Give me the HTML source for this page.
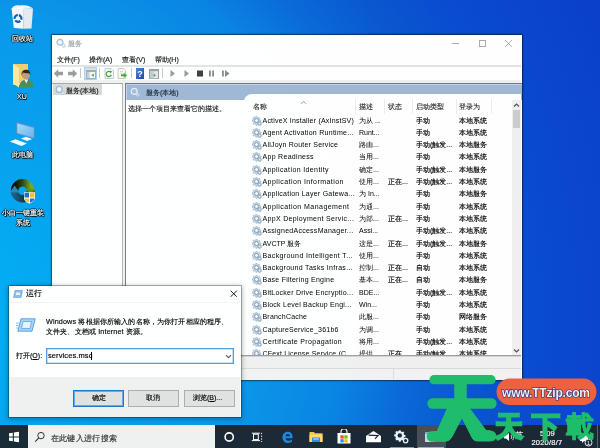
<!DOCTYPE html>
<html><head><meta charset="utf-8">
<style>
*{margin:0;padding:0;box-sizing:border-box}
html,body{width:600px;height:448px;overflow:hidden}
body{position:relative;font-family:"Liberation Sans",sans-serif;font-size:7px;color:#1a1a1a;
background:radial-gradient(circle at -54px 312px,#02b4f8 0px,#04aaf3 80px,#0a98ea 300px,#0a84e2 400px,#0a6ad8 462px,#0a58d0 520px,#0a4bd0 590px,#0a43cc 680px,#0a3dc8 760px)}
.a{position:absolute}
.t{position:absolute;white-space:nowrap;line-height:1;-webkit-text-stroke-width:.15px}
.dl{color:#fff;text-shadow:-.6px 0 .4px #000,.6px 0 .4px #000,0 -.6px .4px #000,0 .6px .4px #000,.8px .8px 1px #000;font-size:7px;text-align:center}
.menu{font-size:7px;color:#1a1a1a}
.hdr{font-size:7px;color:#333}
.vs{top:99px;width:1px;height:15px;background:#ececec}
.srow{position:absolute;left:0;height:12px;width:600px;white-space:nowrap;line-height:1;color:#000}
.srow span{position:absolute;top:1px}
.gi{position:absolute;left:252px;top:0}
.srow .c1{left:262.5px}.srow .c2{left:359px}.srow .c3{left:388px}.srow .c4{left:416px}.srow .c5{left:459px}
.srow .c3,.srow .c4,.srow .c5{-webkit-text-stroke:.15px #000}
.btn{top:390px;height:17px;background:#e1e1e1;border:1px solid #adadad}
.wmc{font-size:28px;font-weight:bold;color:#20be6b;-webkit-text-stroke:2px #20be6b}
/* services window */
#sw{left:50.5px;top:34px;width:472px;height:347px;background:#fff;background-clip:padding-box;border:1px solid rgba(0,0,0,.3);box-shadow:0 0 2px rgba(0,0,0,.3)}
#rw{left:8px;top:284.5px;width:233.5px;height:133.5px;background:#fff;background-clip:padding-box;border:1px solid rgba(0,0,0,.28);box-shadow:0 1px 5px rgba(0,0,0,.3)}
#tb{left:0;top:425px;width:600px;height:23px;background:#1c2a36}
</style></head><body><div style="position:absolute;left:0;top:0;width:600px;height:448px;will-change:transform;opacity:.999">
<!-- desktop icons -->
<svg class="a" style="left:0;top:0" width="50" height="210" viewBox="0 0 50 210">
<defs><linearGradient id="ring" x1="0" y1="0" x2="0" y2="1"><stop offset="0" stop-color="#5f9a18"/><stop offset=".45" stop-color="#2c4a10"/><stop offset=".55" stop-color="#0f2a30"/><stop offset="1" stop-color="#1d5a7a"/></linearGradient></defs>
<!-- recycle bin -->
<path d="M23 8L33 8.8L31.5 28.6L23.5 28.8Z" fill="#e6eaee"/>
<path d="M11.5 8L23 8L23.5 28.8L13.8 28Z" fill="#f4f6f8"/>
<path d="M12 8.5C13 5.5 17 4.8 20 5.5C24 4.5 30 5.5 32.8 8.5Z" fill="#fbfcfd"/>
<circle cx="18" cy="18.4" r="3.4" fill="none" stroke="#1b5db2" stroke-width="2.2" stroke-dasharray="5.6 1.5" transform="rotate(-75 18 18.4)"/><path d="M12.5 8.5C14 7 16 6.5 18 7.2C20 6 23 6.3 25 7.5C27 6.8 30 7 32.5 8.8" fill="none" stroke="#dfe6ec" stroke-width=".8"/>
<!-- user folder -->
<path d="M13 64H28V85H13Z" fill="#f0cf6e"/>
<path d="M13 64L19 68V87.5L13 83.5Z" fill="#fbe7a1"/>
<path d="M19.5 87.5C19.5 82.5 22 79.8 26.5 79.8C31 79.8 33.5 82.5 33.5 87.5Z" fill="#4d8f52"/>
<path d="M24.5 80L26.3 83.5L28 80Z" fill="#e8f0e8"/>
<circle cx="26" cy="75" r="4.2" fill="#c79a74"/>
<path d="M21.6 75.5C21.2 71.2 23.5 69.8 26 69.8C28.8 69.8 30.6 71.5 30.3 75.8L29.2 73.2C27.5 73.5 24.5 73.2 22.8 72.6Z" fill="#2b2824"/>
<!-- this pc -->
<defs><linearGradient id="scr" x1="0" y1="0" x2="1" y2="1"><stop offset="0" stop-color="#a8dafc"/><stop offset="1" stop-color="#6cb2ec"/></linearGradient></defs><path d="M16.3 122L34.7 127V138.8L16.3 133.8Z" fill="#5d9fd6" stroke="#4a86bd" stroke-width=".5"/>
<path d="M17.3 123.4L33.7 127.9V137.4L17.3 132.9Z" fill="url(#scr)"/>
<path d="M20.8 138.5L26 136.8L32.2 139L27 141Z" fill="#eef6fc"/>
<path d="M9.8 141.5L15.5 139.2L27 143.5L21.5 146Z" fill="#f2f8fd"/>
<!-- xiaobai -->
<defs><linearGradient id="rtop" x1="0" y1="0" x2="1" y2="0"><stop offset="0" stop-color="#0c0c08"/><stop offset=".5" stop-color="#2f4a10"/><stop offset="1" stop-color="#74a820"/></linearGradient><linearGradient id="rbot" x1="0" y1="0" x2="1" y2="0"><stop offset="0" stop-color="#1d5f80"/><stop offset="1" stop-color="#0a1e2a"/></linearGradient></defs>
<path d="M14.6 190.8A8 8 0 0 1 30.6 190.8" fill="none" stroke="url(#rtop)" stroke-width="7.5"/>
<path d="M30.6 190.8A8 8 0 0 1 14.6 190.8" fill="none" stroke="url(#rbot)" stroke-width="7.5"/>
<path d="M25.5 189L35.5 189L30.6 195Z" fill="#5f9418"/>
<path d="M9.8 192.5L19.4 192.5L14.6 185.5Z" fill="#2b87b5"/>
<path d="M24 192.3H35V199C33 202 30 203.5 29.5 203.6C29 203.5 25 202 24 199Z" fill="#fff"/>
<path d="M24.5 192.8H29V197.5H24.5Z" fill="#1f6fce"/>
<path d="M30 192.8H34.5V197.5H30Z" fill="#f4bd3d"/>
<path d="M24.5 198.5H29V202.8C26.5 201.8 25 200.5 24.5 199Z" fill="#f4bd3d"/>
<path d="M30 198.5H34.5V199C34 200.5 32.5 201.8 30 202.8Z" fill="#1f6fce"/>
</svg>
<div class="t dl" style="left:12px;top:35px">回收站</div>
<div class="t dl" style="left:17px;top:93px">XU</div>
<div class="t dl" style="left:12px;top:151px">此电脑</div>
<div class="t dl" style="left:2px;top:209px">小白一键重装</div>
<div class="t dl" style="left:16px;top:219px">系统</div>

<!-- services window -->
<div id="sw" class="a"></div>
<svg class="a" style="left:56px;top:38px" width="10" height="10" viewBox="0 0 10 10"><circle cx="4" cy="4.2" r="2.9" fill="#f2f7fc" stroke="#a6c3de" stroke-width="1.4"/><circle cx="7.6" cy="7.8" r="1.5" fill="#fff" stroke="#aac6e0" stroke-width="1"/></svg>
<div class="t" style="left:68px;top:40px;color:#ababab;font-size:7.2px;-webkit-text-stroke-width:.25px">服务</div>
<div class="a" style="left:452px;top:43px;width:7px;height:1px;background:#ababab"></div>
<div class="a" style="left:479px;top:40px;width:7px;height:7px;border:1px solid #ababab"></div>
<svg class="a" style="left:504px;top:39px" width="9" height="9" viewBox="0 0 9 9"><path d="M1 1L8 8M8 1L1 8" stroke="#ababab" stroke-width=".9"/></svg>
<div class="t menu" style="left:57px;top:56px">文件(F)</div>
<div class="t menu" style="left:89px;top:56px">操作(A)</div>
<div class="t menu" style="left:122px;top:56px">查看(V)</div>
<div class="t menu" style="left:155px;top:56px">帮助(H)</div>
<div class="a" style="left:52px;top:65px;width:469px;height:2px;background:#e3e3e3"></div>
<!-- toolbar -->
<svg class="a" style="left:53px;top:68px" width="26" height="11" viewBox="0 0 26 11">
<path d="M.8 5.5L5.2 1.2V3.8H10V7.2H5.2V9.8Z" fill="#9c9c9c"/>
<path d="M24.2 5.5L19.8 1.2V3.8H15V7.2H19.8V9.8Z" fill="#9c9c9c"/></svg>
<div class="a" style="left:80px;top:68px;width:1px;height:10px;background:#c8c8c8"></div>
<div class="a" style="left:84px;top:67px;width:13px;height:13px;background:#cce4f7;border:1px solid #a8d2f5"></div>
<svg class="a" style="left:86px;top:70px" width="10" height="9" viewBox="0 0 10 9"><rect x="0" y="0" width="10" height="9" fill="#a3acb5"/><rect x="1" y="2" width="8" height="6" fill="#f4f6f8"/><rect x="1" y="2" width="2.6" height="6" fill="#c9d0d7"/><path d="M7.8 3.6L5.4 5.2L7.8 6.8Z" fill="#3aa83a"/></svg>
<div class="a" style="left:99px;top:68px;width:1px;height:10px;background:#c8c8c8"></div>
<svg class="a" style="left:104px;top:68px" width="11" height="11" viewBox="0 0 11 11"><path d="M1 .5H7L9.5 3V10.5H1Z" fill="#fafafa" stroke="#b5bcc3" stroke-width=".8"/><path d="M7.3 6.8A2.6 2.6 0 1 1 6.6 4.1" fill="none" stroke="#3ea83e" stroke-width="1.3"/><path d="M5.6 2.6L8.2 3.6L6.4 5.6Z" fill="#3ea83e"/></svg>
<svg class="a" style="left:117px;top:68px" width="11" height="11" viewBox="0 0 11 11"><path d="M1 .5H6.5L8.5 2.5V10.5H1Z" fill="#fbfaf4" stroke="#b9bdb0" stroke-width=".8"/><path d="M3 3.5H6M3 5H5" stroke="#c9c2a0" stroke-width=".6"/><path d="M4 6.3H6.8V4.8L10.3 7.3L6.8 9.8V8.3H4Z" fill="#3fb03f"/></svg>
<div class="a" style="left:131px;top:68px;width:1px;height:10px;background:#c8c8c8"></div>
<svg class="a" style="left:136px;top:68px" width="8" height="11" viewBox="0 0 8 11"><defs><linearGradient id="hg" x1="0" y1="0" x2="1" y2="1"><stop offset="0" stop-color="#4f86d8"/><stop offset="1" stop-color="#1f48a8"/></linearGradient></defs><rect x="0" y="0" width="8" height="11" fill="url(#hg)"/><text x="4" y="8.8" font-size="9" font-family="Liberation Sans" font-weight="bold" fill="#fff" text-anchor="middle">?</text></svg>
<svg class="a" style="left:149px;top:69px" width="10" height="10" viewBox="0 0 10 10"><rect x="0" y="0" width="10" height="10" fill="#9aa2aa"/><rect x="1" y="2.2" width="8" height="7" fill="#e4e7ea"/><rect x="1" y="2.2" width="3.2" height="7" fill="#c5ccd3"/><path d="M4.5 4.5L7 6.2L4.5 7.9Z" fill="#3fae3f"/></svg>
<div class="a" style="left:162px;top:68px;width:1px;height:10px;background:#c8c8c8"></div>
<svg class="a" style="left:168px;top:68px" width="66" height="11" viewBox="0 0 66 11">
<path d="M2.5 2L7 5.5L2.5 9Z" fill="#9a9a9a"/>
<path d="M16.5 2L21 5.5L16.5 9Z" fill="#9a9a9a"/>
<rect x="29" y="2.5" width="6" height="6" fill="#404040"/>
<rect x="41" y="2.5" width="1.8" height="6" fill="#8a8a8a"/><rect x="44.2" y="2.5" width="1.8" height="6" fill="#8a8a8a"/>
<rect x="54" y="2.5" width="1.8" height="6" fill="#8a8a8a"/><path d="M57 2L61.5 5.5L57 9Z" fill="#8a8a8a"/>
</svg>
<!-- panes background -->
<div class="a" style="left:52px;top:80px;width:469px;height:300px;background:#f0f0f0"></div>
<div class="a" style="left:51.5px;top:83px;width:71.5px;height:273px;background:#fff;border-top:1px solid #a8a8a8;border-right:1px solid #b5b5b5;border-bottom:1px solid #c9c9c9"></div>
<div class="a" style="left:53px;top:84px;width:49px;height:11px;background:#d9d9d9"></div>
<svg class="a" style="left:55px;top:85px" width="10" height="10" viewBox="0 0 10 10"><circle cx="4.2" cy="4.4" r="3" fill="#f0f5fa" stroke="#9fbcd8" stroke-width="1.4"/><circle cx="7.8" cy="8" r="1.4" fill="#fff" stroke="#a6c2dc" stroke-width=".9"/></svg>
<div class="t menu" style="left:66px;top:87px">服务(本地)</div>
<!-- right pane -->
<div class="a" style="left:124.5px;top:83px;width:397px;height:274px;background:#fff;border-left:1px solid #77808a;border-top:1px solid #6d7a88"></div>
<div class="a" style="left:125.5px;top:84px;width:396px;height:16px;background:#a0b8d5;box-shadow:inset 1px 1px 0 #c3d3e4"></div>
<div class="a" style="left:244px;top:94px;width:277px;height:10px;background:#fff;border-top-left-radius:8px"></div>
<svg class="a" style="left:130px;top:87px" width="10" height="10" viewBox="0 0 10 10"><circle cx="4.2" cy="4.4" r="3" fill="#a8bed8" stroke="#e2ecf6" stroke-width="1.3"/><circle cx="7.8" cy="8" r="1.3" fill="#a8bed8" stroke="#d8e4f0" stroke-width=".8"/></svg>
<div class="t" style="left:146px;top:89px;font-size:7px;color:#1e2b3a">服务(本地)</div>
<div class="t" style="left:128px;top:105px;font-size:7px">选择一个项目来查看它的描述。</div>
<!-- list header -->
<div class="t hdr" style="left:253px;top:103.3px">名称</div>
<svg class="a" style="left:300px;top:99.5px" width="7" height="5" viewBox="0 0 7 5"><path d="M1 3.8L3.5 1.3L6 3.8" fill="none" stroke="#8a8a8a" stroke-width=".9"/></svg>
<div class="a vs" style="left:355px"></div>
<div class="a vs" style="left:384px"></div>
<div class="a vs" style="left:412px"></div>
<div class="a vs" style="left:456px"></div>
<div class="a vs" style="left:491px"></div>
<div class="t hdr" style="left:359px;top:103.3px">描述</div>
<div class="t hdr" style="left:388px;top:103.3px">状态</div>
<div class="t hdr" style="left:416px;top:103.3px">启动类型</div>
<div class="t hdr" style="left:459px;top:103.3px">登录为</div>
<!-- scrollbar -->
<div class="a" style="left:512px;top:100px;width:9px;height:256px;background:#f0f0f0"></div>
<svg class="a" style="left:513px;top:102px" width="7" height="6" viewBox="0 0 7 6"><path d="M1 4.5L3.5 2L6 4.5" fill="none" stroke="#555" stroke-width="1.2"/></svg>
<div class="a" style="left:513px;top:110px;width:7px;height:18px;background:#cdcdcd"></div>
<svg class="a" style="left:513px;top:348px" width="7" height="6" viewBox="0 0 7 6"><path d="M1 1.5L3.5 4L6 1.5" fill="none" stroke="#555" stroke-width="1.2"/></svg>
<div class="a" style="left:245px;top:114px;width:267px;height:241px;overflow:hidden">
<div class="a" style="left:-245px;top:-114px;width:600px;height:448px">
<div class="srow" style="top:115.5px"><svg class="gi" width="10" height="10" viewBox="0 0 10 10"><path d="M3.9 .3h1.2l.3 1.1 .9.4 1-.6.8.8-.6 1 .4.9 1.1.3v1.2l-1.1.3-.4.9.6 1-.8.8-1-.6-.9.4-.3 1.1H3.9l-.3-1.1-.9-.4-1 .6-.8-.8.6-1-.4-.9L0 5.1V3.9l1.1-.3.4-.9-.6-1 .8-.8 1 .6.9-.4z" fill="#c6d6e4" stroke="#94abc2" stroke-width=".5"/><circle cx="4.5" cy="4.5" r="2" fill="#f4f8fb" stroke="#7893ae" stroke-width=".9"/><circle cx="7.6" cy="7.6" r="1.9" fill="#b3c6d8" stroke="#7d95ad" stroke-width=".5"/><circle cx="7.6" cy="7.6" r=".6" fill="#fff"/></svg><span class="c1" style="letter-spacing:0.21px">ActiveX Installer (AxInstSV)</span><span class="c2">为从 ...</span><span class="c3"></span><span class="c4">手动</span><span class="c5">本地系统</span></div>
<div class="srow" style="top:127.8px"><svg class="gi" width="10" height="10" viewBox="0 0 10 10"><path d="M3.9 .3h1.2l.3 1.1 .9.4 1-.6.8.8-.6 1 .4.9 1.1.3v1.2l-1.1.3-.4.9.6 1-.8.8-1-.6-.9.4-.3 1.1H3.9l-.3-1.1-.9-.4-1 .6-.8-.8.6-1-.4-.9L0 5.1V3.9l1.1-.3.4-.9-.6-1 .8-.8 1 .6.9-.4z" fill="#c6d6e4" stroke="#94abc2" stroke-width=".5"/><circle cx="4.5" cy="4.5" r="2" fill="#f4f8fb" stroke="#7893ae" stroke-width=".9"/><circle cx="7.6" cy="7.6" r="1.9" fill="#b3c6d8" stroke="#7d95ad" stroke-width=".5"/><circle cx="7.6" cy="7.6" r=".6" fill="#fff"/></svg><span class="c1" style="letter-spacing:0.27px">Agent Activation Runtime...</span><span class="c2">Runt...</span><span class="c3"></span><span class="c4">手动</span><span class="c5">本地系统</span></div>
<div class="srow" style="top:140.1px"><svg class="gi" width="10" height="10" viewBox="0 0 10 10"><path d="M3.9 .3h1.2l.3 1.1 .9.4 1-.6.8.8-.6 1 .4.9 1.1.3v1.2l-1.1.3-.4.9.6 1-.8.8-1-.6-.9.4-.3 1.1H3.9l-.3-1.1-.9-.4-1 .6-.8-.8.6-1-.4-.9L0 5.1V3.9l1.1-.3.4-.9-.6-1 .8-.8 1 .6.9-.4z" fill="#c6d6e4" stroke="#94abc2" stroke-width=".5"/><circle cx="4.5" cy="4.5" r="2" fill="#f4f8fb" stroke="#7893ae" stroke-width=".9"/><circle cx="7.6" cy="7.6" r="1.9" fill="#b3c6d8" stroke="#7d95ad" stroke-width=".5"/><circle cx="7.6" cy="7.6" r=".6" fill="#fff"/></svg><span class="c1" style="letter-spacing:0.22px">AllJoyn Router Service</span><span class="c2">路由...</span><span class="c3"></span><span class="c4">手动(触发...</span><span class="c5">本地服务</span></div>
<div class="srow" style="top:152.4px"><svg class="gi" width="10" height="10" viewBox="0 0 10 10"><path d="M3.9 .3h1.2l.3 1.1 .9.4 1-.6.8.8-.6 1 .4.9 1.1.3v1.2l-1.1.3-.4.9.6 1-.8.8-1-.6-.9.4-.3 1.1H3.9l-.3-1.1-.9-.4-1 .6-.8-.8.6-1-.4-.9L0 5.1V3.9l1.1-.3.4-.9-.6-1 .8-.8 1 .6.9-.4z" fill="#c6d6e4" stroke="#94abc2" stroke-width=".5"/><circle cx="4.5" cy="4.5" r="2" fill="#f4f8fb" stroke="#7893ae" stroke-width=".9"/><circle cx="7.6" cy="7.6" r="1.9" fill="#b3c6d8" stroke="#7d95ad" stroke-width=".5"/><circle cx="7.6" cy="7.6" r=".6" fill="#fff"/></svg><span class="c1" style="letter-spacing:0.30px">App Readiness</span><span class="c2">当用...</span><span class="c3"></span><span class="c4">手动</span><span class="c5">本地系统</span></div>
<div class="srow" style="top:164.7px"><svg class="gi" width="10" height="10" viewBox="0 0 10 10"><path d="M3.9 .3h1.2l.3 1.1 .9.4 1-.6.8.8-.6 1 .4.9 1.1.3v1.2l-1.1.3-.4.9.6 1-.8.8-1-.6-.9.4-.3 1.1H3.9l-.3-1.1-.9-.4-1 .6-.8-.8.6-1-.4-.9L0 5.1V3.9l1.1-.3.4-.9-.6-1 .8-.8 1 .6.9-.4z" fill="#c6d6e4" stroke="#94abc2" stroke-width=".5"/><circle cx="4.5" cy="4.5" r="2" fill="#f4f8fb" stroke="#7893ae" stroke-width=".9"/><circle cx="7.6" cy="7.6" r="1.9" fill="#b3c6d8" stroke="#7d95ad" stroke-width=".5"/><circle cx="7.6" cy="7.6" r=".6" fill="#fff"/></svg><span class="c1" style="letter-spacing:0.38px">Application Identity</span><span class="c2">确定...</span><span class="c3"></span><span class="c4">手动(触发...</span><span class="c5">本地服务</span></div>
<div class="srow" style="top:177.0px"><svg class="gi" width="10" height="10" viewBox="0 0 10 10"><path d="M3.9 .3h1.2l.3 1.1 .9.4 1-.6.8.8-.6 1 .4.9 1.1.3v1.2l-1.1.3-.4.9.6 1-.8.8-1-.6-.9.4-.3 1.1H3.9l-.3-1.1-.9-.4-1 .6-.8-.8.6-1-.4-.9L0 5.1V3.9l1.1-.3.4-.9-.6-1 .8-.8 1 .6.9-.4z" fill="#c6d6e4" stroke="#94abc2" stroke-width=".5"/><circle cx="4.5" cy="4.5" r="2" fill="#f4f8fb" stroke="#7893ae" stroke-width=".9"/><circle cx="7.6" cy="7.6" r="1.9" fill="#b3c6d8" stroke="#7d95ad" stroke-width=".5"/><circle cx="7.6" cy="7.6" r=".6" fill="#fff"/></svg><span class="c1" style="letter-spacing:0.44px">Application Information</span><span class="c2">使用...</span><span class="c3">正在...</span><span class="c4">手动(触发...</span><span class="c5">本地系统</span></div>
<div class="srow" style="top:189.3px"><svg class="gi" width="10" height="10" viewBox="0 0 10 10"><path d="M3.9 .3h1.2l.3 1.1 .9.4 1-.6.8.8-.6 1 .4.9 1.1.3v1.2l-1.1.3-.4.9.6 1-.8.8-1-.6-.9.4-.3 1.1H3.9l-.3-1.1-.9-.4-1 .6-.8-.8.6-1-.4-.9L0 5.1V3.9l1.1-.3.4-.9-.6-1 .8-.8 1 .6.9-.4z" fill="#c6d6e4" stroke="#94abc2" stroke-width=".5"/><circle cx="4.5" cy="4.5" r="2" fill="#f4f8fb" stroke="#7893ae" stroke-width=".9"/><circle cx="7.6" cy="7.6" r="1.9" fill="#b3c6d8" stroke="#7d95ad" stroke-width=".5"/><circle cx="7.6" cy="7.6" r=".6" fill="#fff"/></svg><span class="c1" style="letter-spacing:0.25px">Application Layer Gatewa...</span><span class="c2">为 In...</span><span class="c3"></span><span class="c4">手动</span><span class="c5">本地服务</span></div>
<div class="srow" style="top:201.6px"><svg class="gi" width="10" height="10" viewBox="0 0 10 10"><path d="M3.9 .3h1.2l.3 1.1 .9.4 1-.6.8.8-.6 1 .4.9 1.1.3v1.2l-1.1.3-.4.9.6 1-.8.8-1-.6-.9.4-.3 1.1H3.9l-.3-1.1-.9-.4-1 .6-.8-.8.6-1-.4-.9L0 5.1V3.9l1.1-.3.4-.9-.6-1 .8-.8 1 .6.9-.4z" fill="#c6d6e4" stroke="#94abc2" stroke-width=".5"/><circle cx="4.5" cy="4.5" r="2" fill="#f4f8fb" stroke="#7893ae" stroke-width=".9"/><circle cx="7.6" cy="7.6" r="1.9" fill="#b3c6d8" stroke="#7d95ad" stroke-width=".5"/><circle cx="7.6" cy="7.6" r=".6" fill="#fff"/></svg><span class="c1" style="letter-spacing:0.45px">Application Management</span><span class="c2">为通...</span><span class="c3"></span><span class="c4">手动</span><span class="c5">本地系统</span></div>
<div class="srow" style="top:213.9px"><svg class="gi" width="10" height="10" viewBox="0 0 10 10"><path d="M3.9 .3h1.2l.3 1.1 .9.4 1-.6.8.8-.6 1 .4.9 1.1.3v1.2l-1.1.3-.4.9.6 1-.8.8-1-.6-.9.4-.3 1.1H3.9l-.3-1.1-.9-.4-1 .6-.8-.8.6-1-.4-.9L0 5.1V3.9l1.1-.3.4-.9-.6-1 .8-.8 1 .6.9-.4z" fill="#c6d6e4" stroke="#94abc2" stroke-width=".5"/><circle cx="4.5" cy="4.5" r="2" fill="#f4f8fb" stroke="#7893ae" stroke-width=".9"/><circle cx="7.6" cy="7.6" r="1.9" fill="#b3c6d8" stroke="#7d95ad" stroke-width=".5"/><circle cx="7.6" cy="7.6" r=".6" fill="#fff"/></svg><span class="c1" style="letter-spacing:0.32px">AppX Deployment Servic...</span><span class="c2">为部...</span><span class="c3">正在...</span><span class="c4">手动</span><span class="c5">本地系统</span></div>
<div class="srow" style="top:226.2px"><svg class="gi" width="10" height="10" viewBox="0 0 10 10"><path d="M3.9 .3h1.2l.3 1.1 .9.4 1-.6.8.8-.6 1 .4.9 1.1.3v1.2l-1.1.3-.4.9.6 1-.8.8-1-.6-.9.4-.3 1.1H3.9l-.3-1.1-.9-.4-1 .6-.8-.8.6-1-.4-.9L0 5.1V3.9l1.1-.3.4-.9-.6-1 .8-.8 1 .6.9-.4z" fill="#c6d6e4" stroke="#94abc2" stroke-width=".5"/><circle cx="4.5" cy="4.5" r="2" fill="#f4f8fb" stroke="#7893ae" stroke-width=".9"/><circle cx="7.6" cy="7.6" r="1.9" fill="#b3c6d8" stroke="#7d95ad" stroke-width=".5"/><circle cx="7.6" cy="7.6" r=".6" fill="#fff"/></svg><span class="c1" style="letter-spacing:0.27px">AssignedAccessManager...</span><span class="c2">Assi...</span><span class="c3"></span><span class="c4">手动(触发...</span><span class="c5">本地系统</span></div>
<div class="srow" style="top:238.5px"><svg class="gi" width="10" height="10" viewBox="0 0 10 10"><path d="M3.9 .3h1.2l.3 1.1 .9.4 1-.6.8.8-.6 1 .4.9 1.1.3v1.2l-1.1.3-.4.9.6 1-.8.8-1-.6-.9.4-.3 1.1H3.9l-.3-1.1-.9-.4-1 .6-.8-.8.6-1-.4-.9L0 5.1V3.9l1.1-.3.4-.9-.6-1 .8-.8 1 .6.9-.4z" fill="#c6d6e4" stroke="#94abc2" stroke-width=".5"/><circle cx="4.5" cy="4.5" r="2" fill="#f4f8fb" stroke="#7893ae" stroke-width=".9"/><circle cx="7.6" cy="7.6" r="1.9" fill="#b3c6d8" stroke="#7d95ad" stroke-width=".5"/><circle cx="7.6" cy="7.6" r=".6" fill="#fff"/></svg><span class="c1" style="letter-spacing:0.04px">AVCTP 服务</span><span class="c2">这是...</span><span class="c3">正在...</span><span class="c4">手动(触发...</span><span class="c5">本地服务</span></div>
<div class="srow" style="top:250.8px"><svg class="gi" width="10" height="10" viewBox="0 0 10 10"><path d="M3.9 .3h1.2l.3 1.1 .9.4 1-.6.8.8-.6 1 .4.9 1.1.3v1.2l-1.1.3-.4.9.6 1-.8.8-1-.6-.9.4-.3 1.1H3.9l-.3-1.1-.9-.4-1 .6-.8-.8.6-1-.4-.9L0 5.1V3.9l1.1-.3.4-.9-.6-1 .8-.8 1 .6.9-.4z" fill="#c6d6e4" stroke="#94abc2" stroke-width=".5"/><circle cx="4.5" cy="4.5" r="2" fill="#f4f8fb" stroke="#7893ae" stroke-width=".9"/><circle cx="7.6" cy="7.6" r="1.9" fill="#b3c6d8" stroke="#7d95ad" stroke-width=".5"/><circle cx="7.6" cy="7.6" r=".6" fill="#fff"/></svg><span class="c1" style="letter-spacing:0.38px">Background Intelligent T...</span><span class="c2">使用...</span><span class="c3"></span><span class="c4">手动</span><span class="c5">本地系统</span></div>
<div class="srow" style="top:263.1px"><svg class="gi" width="10" height="10" viewBox="0 0 10 10"><path d="M3.9 .3h1.2l.3 1.1 .9.4 1-.6.8.8-.6 1 .4.9 1.1.3v1.2l-1.1.3-.4.9.6 1-.8.8-1-.6-.9.4-.3 1.1H3.9l-.3-1.1-.9-.4-1 .6-.8-.8.6-1-.4-.9L0 5.1V3.9l1.1-.3.4-.9-.6-1 .8-.8 1 .6.9-.4z" fill="#c6d6e4" stroke="#94abc2" stroke-width=".5"/><circle cx="4.5" cy="4.5" r="2" fill="#f4f8fb" stroke="#7893ae" stroke-width=".9"/><circle cx="7.6" cy="7.6" r="1.9" fill="#b3c6d8" stroke="#7d95ad" stroke-width=".5"/><circle cx="7.6" cy="7.6" r=".6" fill="#fff"/></svg><span class="c1" style="letter-spacing:0.31px">Background Tasks Infras...</span><span class="c2">控制...</span><span class="c3">正在...</span><span class="c4">自动</span><span class="c5">本地系统</span></div>
<div class="srow" style="top:275.4px"><svg class="gi" width="10" height="10" viewBox="0 0 10 10"><path d="M3.9 .3h1.2l.3 1.1 .9.4 1-.6.8.8-.6 1 .4.9 1.1.3v1.2l-1.1.3-.4.9.6 1-.8.8-1-.6-.9.4-.3 1.1H3.9l-.3-1.1-.9-.4-1 .6-.8-.8.6-1-.4-.9L0 5.1V3.9l1.1-.3.4-.9-.6-1 .8-.8 1 .6.9-.4z" fill="#c6d6e4" stroke="#94abc2" stroke-width=".5"/><circle cx="4.5" cy="4.5" r="2" fill="#f4f8fb" stroke="#7893ae" stroke-width=".9"/><circle cx="7.6" cy="7.6" r="1.9" fill="#b3c6d8" stroke="#7d95ad" stroke-width=".5"/><circle cx="7.6" cy="7.6" r=".6" fill="#fff"/></svg><span class="c1" style="letter-spacing:0.25px">Base Filtering Engine</span><span class="c2">基本...</span><span class="c3">正在...</span><span class="c4">自动</span><span class="c5">本地服务</span></div>
<div class="srow" style="top:287.7px"><svg class="gi" width="10" height="10" viewBox="0 0 10 10"><path d="M3.9 .3h1.2l.3 1.1 .9.4 1-.6.8.8-.6 1 .4.9 1.1.3v1.2l-1.1.3-.4.9.6 1-.8.8-1-.6-.9.4-.3 1.1H3.9l-.3-1.1-.9-.4-1 .6-.8-.8.6-1-.4-.9L0 5.1V3.9l1.1-.3.4-.9-.6-1 .8-.8 1 .6.9-.4z" fill="#c6d6e4" stroke="#94abc2" stroke-width=".5"/><circle cx="4.5" cy="4.5" r="2" fill="#f4f8fb" stroke="#7893ae" stroke-width=".9"/><circle cx="7.6" cy="7.6" r="1.9" fill="#b3c6d8" stroke="#7d95ad" stroke-width=".5"/><circle cx="7.6" cy="7.6" r=".6" fill="#fff"/></svg><span class="c1" style="letter-spacing:0.23px">BitLocker Drive Encryptio...</span><span class="c2">BDE...</span><span class="c3"></span><span class="c4">手动(触发...</span><span class="c5">本地系统</span></div>
<div class="srow" style="top:300.0px"><svg class="gi" width="10" height="10" viewBox="0 0 10 10"><path d="M3.9 .3h1.2l.3 1.1 .9.4 1-.6.8.8-.6 1 .4.9 1.1.3v1.2l-1.1.3-.4.9.6 1-.8.8-1-.6-.9.4-.3 1.1H3.9l-.3-1.1-.9-.4-1 .6-.8-.8.6-1-.4-.9L0 5.1V3.9l1.1-.3.4-.9-.6-1 .8-.8 1 .6.9-.4z" fill="#c6d6e4" stroke="#94abc2" stroke-width=".5"/><circle cx="4.5" cy="4.5" r="2" fill="#f4f8fb" stroke="#7893ae" stroke-width=".9"/><circle cx="7.6" cy="7.6" r="1.9" fill="#b3c6d8" stroke="#7d95ad" stroke-width=".5"/><circle cx="7.6" cy="7.6" r=".6" fill="#fff"/></svg><span class="c1" style="letter-spacing:0.24px">Block Level Backup Engi...</span><span class="c2">Win...</span><span class="c3"></span><span class="c4">手动</span><span class="c5">本地系统</span></div>
<div class="srow" style="top:312.3px"><svg class="gi" width="10" height="10" viewBox="0 0 10 10"><path d="M3.9 .3h1.2l.3 1.1 .9.4 1-.6.8.8-.6 1 .4.9 1.1.3v1.2l-1.1.3-.4.9.6 1-.8.8-1-.6-.9.4-.3 1.1H3.9l-.3-1.1-.9-.4-1 .6-.8-.8.6-1-.4-.9L0 5.1V3.9l1.1-.3.4-.9-.6-1 .8-.8 1 .6.9-.4z" fill="#c6d6e4" stroke="#94abc2" stroke-width=".5"/><circle cx="4.5" cy="4.5" r="2" fill="#f4f8fb" stroke="#7893ae" stroke-width=".9"/><circle cx="7.6" cy="7.6" r="1.9" fill="#b3c6d8" stroke="#7d95ad" stroke-width=".5"/><circle cx="7.6" cy="7.6" r=".6" fill="#fff"/></svg><span class="c1" style="letter-spacing:0.20px">BranchCache</span><span class="c2">此服...</span><span class="c3"></span><span class="c4">手动</span><span class="c5">网络服务</span></div>
<div class="srow" style="top:324.6px"><svg class="gi" width="10" height="10" viewBox="0 0 10 10"><path d="M3.9 .3h1.2l.3 1.1 .9.4 1-.6.8.8-.6 1 .4.9 1.1.3v1.2l-1.1.3-.4.9.6 1-.8.8-1-.6-.9.4-.3 1.1H3.9l-.3-1.1-.9-.4-1 .6-.8-.8.6-1-.4-.9L0 5.1V3.9l1.1-.3.4-.9-.6-1 .8-.8 1 .6.9-.4z" fill="#c6d6e4" stroke="#94abc2" stroke-width=".5"/><circle cx="4.5" cy="4.5" r="2" fill="#f4f8fb" stroke="#7893ae" stroke-width=".9"/><circle cx="7.6" cy="7.6" r="1.9" fill="#b3c6d8" stroke="#7d95ad" stroke-width=".5"/><circle cx="7.6" cy="7.6" r=".6" fill="#fff"/></svg><span class="c1" style="letter-spacing:0.23px">CaptureService_361b6</span><span class="c2">为调...</span><span class="c3"></span><span class="c4">手动</span><span class="c5">本地系统</span></div>
<div class="srow" style="top:336.9px"><svg class="gi" width="10" height="10" viewBox="0 0 10 10"><path d="M3.9 .3h1.2l.3 1.1 .9.4 1-.6.8.8-.6 1 .4.9 1.1.3v1.2l-1.1.3-.4.9.6 1-.8.8-1-.6-.9.4-.3 1.1H3.9l-.3-1.1-.9-.4-1 .6-.8-.8.6-1-.4-.9L0 5.1V3.9l1.1-.3.4-.9-.6-1 .8-.8 1 .6.9-.4z" fill="#c6d6e4" stroke="#94abc2" stroke-width=".5"/><circle cx="4.5" cy="4.5" r="2" fill="#f4f8fb" stroke="#7893ae" stroke-width=".9"/><circle cx="7.6" cy="7.6" r="1.9" fill="#b3c6d8" stroke="#7d95ad" stroke-width=".5"/><circle cx="7.6" cy="7.6" r=".6" fill="#fff"/></svg><span class="c1" style="letter-spacing:0.36px">Certificate Propagation</span><span class="c2">将用...</span><span class="c3"></span><span class="c4">手动(触发...</span><span class="c5">本地系统</span></div>
<div class="srow" style="top:349.2px"><svg class="gi" width="10" height="10" viewBox="0 0 10 10"><path d="M3.9 .3h1.2l.3 1.1 .9.4 1-.6.8.8-.6 1 .4.9 1.1.3v1.2l-1.1.3-.4.9.6 1-.8.8-1-.6-.9.4-.3 1.1H3.9l-.3-1.1-.9-.4-1 .6-.8-.8.6-1-.4-.9L0 5.1V3.9l1.1-.3.4-.9-.6-1 .8-.8 1 .6.9-.4z" fill="#c6d6e4" stroke="#94abc2" stroke-width=".5"/><circle cx="4.5" cy="4.5" r="2" fill="#f4f8fb" stroke="#7893ae" stroke-width=".9"/><circle cx="7.6" cy="7.6" r="1.9" fill="#b3c6d8" stroke="#7d95ad" stroke-width=".5"/><circle cx="7.6" cy="7.6" r=".6" fill="#fff"/></svg><span class="c1" style="letter-spacing:0.18px">CFext License Service (C...</span><span class="c2">提供...</span><span class="c3">正在...</span><span class="c4">手动(触发...</span><span class="c5">本地系统</span></div>
</div></div>
<div class="a" style="left:126px;top:355px;width:395px;height:1px;background:#a0a0a0"></div><div class="a" style="left:126px;top:356px;width:395px;height:1px;background:#d5d5d5"></div>
<div class="a" style="left:52px;top:368px;width:469px;height:1px;background:#dadada"></div><div class="a" style="left:52px;top:369px;width:469px;height:11px;background:#f2f2f2"></div><div class="a" style="left:393px;top:369px;width:1px;height:10px;background:#dcdcdc"></div>

<!-- run dialog -->
<div id="rw" class="a"></div>
<svg class="a" style="left:13px;top:290px" width="10" height="8" viewBox="0 0 10 8"><path d="M2 .5H9.5L8 7.5H.5Z" fill="#8cc0ea" stroke="#5a9ad6" stroke-width=".6"/><rect x="3" y="2.5" width="4" height="2.5" fill="#fff" opacity=".8"/></svg>
<div class="t" style="left:26px;top:290px;font-size:7.5px;color:#000">运行</div>
<svg class="a" style="left:229.5px;top:289.5px" width="8" height="8" viewBox="0 0 8 8"><path d="M.7 .7L6.8 6.8M6.8 .7L.7 6.8" stroke="#1a1a1a" stroke-width="1"/></svg>
<div class="a" style="left:9px;top:302px;width:231px;height:1px;background:#f3f3f3"></div>
<svg class="a" style="left:16px;top:318px" width="20" height="14" viewBox="0 0 20 14"><path d="M5 .8H19.2L16 13.2H1.8Z" fill="#a9d3f5" stroke="#4f9be0" stroke-width=".9"/><path d="M7 3.5H15.5L14 10.5H5.5Z" fill="#e6f3fd" stroke="#4f9be0" stroke-width=".7"/><path d="M0 5H3M0 7.5H2.5M0 10H2" stroke="#6fb0e8" stroke-width=".8"/></svg>
<div class="t" style="left:46px;top:318px;font-size:7.2px;color:#000;letter-spacing:.15px">Windows 将根据你所输入的名称，为你打开相应的程序、</div>
<div class="t" style="left:46px;top:328px;font-size:7.2px;color:#000;letter-spacing:.15px">文件夹、文档或 Internet 资源。</div>
<div class="t" style="left:16px;top:352px;font-size:7px;color:#000">打开(<u>O</u>):</div>
<div class="a" style="left:46px;top:348px;width:188px;height:15.5px;background:#fff;border:1px solid #5a9fe0;box-shadow:inset 0 0 0 .6px #9cc8ee"></div>
<div class="t" style="left:48px;top:352px;font-size:7.5px;color:#000;letter-spacing:.1px">services.msc</div>
<div class="a" style="left:90.5px;top:352px;width:1px;height:8px;background:#000"></div>
<svg class="a" style="left:225px;top:353.5px" width="7" height="5" viewBox="0 0 7 5"><path d="M1 1.2L3.5 3.7L6 1.2" fill="none" stroke="#555" stroke-width="1.1"/></svg>
<div class="a" style="left:9px;top:377px;width:231px;height:40px;background:#f0f0f0"></div>
<div class="a btn" style="left:73px;width:51px;border:1px solid #1f78d1;box-shadow:inset 0 0 0 1px #6aaae8"></div>
<div class="t" style="left:92px;top:394px;font-size:7px;color:#000">确定</div>
<div class="a btn" style="left:128px;width:51px"></div>
<div class="t" style="left:146px;top:394px;font-size:7px;color:#000">取消</div>
<div class="a btn" style="left:184px;width:51px"></div>
<div class="t" style="left:193px;top:394px;font-size:7px;color:#000">浏览(<u>B</u>)...</div>

<!-- taskbar -->
<div id="tb" class="a"></div>
<div class="a" style="left:0;top:425px;width:28px;height:23px;background:#1b2c37"></div><svg class="a" style="left:8px;top:431px" width="12" height="12" viewBox="0 0 12 12"><path d="M1 2.2L4.8 1.7V5.4H1ZM5.9 1.5L11 .8V5.4H5.9ZM1 6.5H4.8V10.2L1 9.7ZM5.9 6.5H11V11.2L5.9 10.5Z" fill="#fff"/></svg>
<div class="a" style="left:28px;top:425px;width:187px;height:23px;background:#f0f0f0"></div>
<svg class="a" style="left:34px;top:431px" width="12" height="12" viewBox="0 0 12 12"><circle cx="7" cy="4.6" r="3.2" fill="none" stroke="#333" stroke-width="1"/><path d="M4.8 6.9L1.2 10.6" stroke="#333" stroke-width="1.1"/></svg>
<div class="t" style="left:50.5px;top:434.5px;font-size:8.2px;color:#333;letter-spacing:.35px">在此键入进行搜索</div>
<svg class="a" style="left:223px;top:431px" width="13" height="13" viewBox="0 0 13 13"><circle cx="6.2" cy="6" r="4.1" fill="none" stroke="#fff" stroke-width="1.6"/></svg>
<svg class="a" style="left:251px;top:432px" width="12" height="10" viewBox="0 0 12 10"><path d="M.8 1.2H9M.8 8.6H9" stroke="#fff" stroke-width="1"/><rect x="2.5" y="2.2" width="4.8" height="5.4" fill="none" stroke="#fff" stroke-width="1"/><path d="M10.6 .8V2.2M10.6 3.6V5M10.6 6.4V7.8M10.6 9V10" stroke="#fff" stroke-width=".9"/></svg>
<svg class="a" style="left:281px;top:431px" width="13" height="13" viewBox="0 0 13 13"><path d="M11 10.6C9.9 11.6 8.4 12 7 12C3.9 12 1.5 9.9 1.5 6.4C1.5 3 3.8.8 6.6.8C9.6.8 11.6 2.8 11.6 6.2V7.3H4.5C4.7 9 6 9.8 7.6 9.8C8.8 9.8 10 9.4 11 8.6Z M9 5.3C8.9 3.9 8 3 6.7 3C5.4 3 4.6 4 4.5 5.3Z" fill="#1e88e5" fill-rule="evenodd"/></svg>
<svg class="a" style="left:309px;top:431px" width="14" height="12" viewBox="0 0 14 12"><path d="M.5 1H5L6 2.2H13.5V11H.5Z" fill="#f3c54a"/><path d="M.5 3.5H13.5V11H.5Z" fill="#ffd86a"/><rect x="3" y="6.5" width="8" height="4.5" fill="#2f8ee6"/><rect x="4.2" y="7.5" width="5.6" height="1" fill="#fff" opacity=".8"/></svg>
<svg class="a" style="left:336px;top:429px" width="16" height="15" viewBox="0 0 16 15"><path d="M5 4V2.8A3 3 0 0 1 11 2.8V4" fill="none" stroke="#fff" stroke-width="1.1"/><rect x="1.5" y="4" width="13" height="10.5" fill="#fff"/><rect x="4.4" y="6.3" width="3.3" height="3.3" fill="#f25022"/><rect x="8.3" y="6.3" width="3.3" height="3.3" fill="#7fba00"/><rect x="4.4" y="10.2" width="3.3" height="3.3" fill="#00a4ef"/><rect x="8.3" y="10.2" width="3.3" height="3.3" fill="#ffb900"/></svg>
<svg class="a" style="left:365px;top:430px" width="17" height="13" viewBox="0 0 17 13"><path d="M1 6L8.5 1L16 6V12.3H1Z" fill="#fff"/><path d="M3.5 5.2L13 5.6L10 8.8" fill="none" stroke="#1d2935" stroke-width="1.2"/></svg>
<svg class="a" style="left:394px;top:430px" width="16" height="14" viewBox="0 0 16 14"><path d="M5 .3h1.6l.4 1.3 1 .5 1.2-.6 1.1 1.1-.6 1.2.5 1 1.3.4v1.6l-1.3.4-.5 1 .6 1.2-1.1 1.1-1.2-.6-1 .5-.4 1.3H5l-.4-1.3-1-.5-1.2.6L1.3 8.8l.6-1.2-.5-1L.1 6.2V4.6l1.3-.4.5-1-.6-1.2L2.4.9l1.2.6 1-.5z" fill="#e8f0f8"/><circle cx="5.8" cy="5.4" r="2.2" fill="#1d2935"/><circle cx="11.6" cy="10.6" r="2.2" fill="none" stroke="#e8f0f8" stroke-width="1.3"/></svg>
<div class="a" style="left:390px;top:447px;width:24px;height:1px;background:#8a9aa8"></div>
<div class="a" style="left:417px;top:425px;width:28.5px;height:23px;background:#4a5059"></div>
<svg class="a" style="left:424px;top:431px" width="12" height="12" viewBox="0 0 12 12"><rect x="1" y="1" width="10" height="10" fill="#c8d8ea"/><rect x="1" y="1" width="10" height="2" fill="#8aa5c5"/></svg>
<div class="a" style="left:418px;top:447px;width:26px;height:1px;background:#9fb0c0"></div>
<div class="t" style="left:515px;top:432px;font-size:7.5px;color:#fff">英</div>
<svg class="a" style="left:503px;top:432px" width="12" height="10" viewBox="0 0 12 10"><path d="M1 3.5H3L6 1V9L3 6.5H1Z" fill="#fff"/><path d="M8 3A3 3 0 0 1 8 7M9.5 1.8A4.6 4.6 0 0 1 9.5 8.2" fill="none" stroke="#fff" stroke-width=".8"/></svg>
<div class="t" style="left:540px;top:430px;font-size:7.5px;color:#fff">5:09</div>
<div class="t" style="left:531.5px;top:439px;font-size:7.5px;color:#fff;letter-spacing:.2px">2020/8/7</div>
<svg class="a" style="left:579px;top:433px" width="14" height="14" viewBox="0 0 14 14"><path d="M1 1H9V8H5L3 10V8H1Z" fill="#fff"/><circle cx="9.5" cy="9.5" r="3.5" fill="#1f2a36" stroke="#fff" stroke-width=".9"/><text x="9.5" y="11.7" font-size="5.5" font-family="Liberation Sans" fill="#fff" text-anchor="middle">1</text></svg>

<div class="a" style="left:597px;top:425px;width:1px;height:23px;background:#5a6570"></div>
<!-- watermark -->
<svg class="a" style="left:0;top:0" width="600" height="448" viewBox="0 0 600 448">
<g stroke="#20be6b" fill="none">
<path d="M434 379.7H491" stroke-width="9.3" stroke-linecap="round"/>
<path d="M432.5 403.5H491.5" stroke-width="10.3" stroke-linecap="round"/>
<path d="M460.5 382V400" stroke-width="12.5"/>
<path d="M448 407L468.5 407L486 430.5Q496 430.5 496 436Q496 441 490 441L477 441Q474 441 472.5 438.5L462 417.5L451.5 437.5Q449.5 441.3 445.5 441.3L432.5 441.3Q427.2 441.3 427.2 436.5Q427.2 431.6 432.5 431.6L437 431.6Z" fill="#20be6b" stroke="#20be6b" stroke-width="1" stroke-linejoin="round"/>
</g>
<rect x="496.5" y="378.5" width="100" height="26.5" rx="13.25" fill="#ee6241"/>
<text x="546" y="397.3" text-anchor="middle" font-family="Liberation Sans" font-weight="bold" font-size="12" fill="#eef0fa" stroke="#1d2a78" stroke-width="1.2" paint-order="stroke" textLength="88" lengthAdjust="spacing">www.TTzip.com</text>
</svg>
<div class="t wmc" style="left:495px;top:413px">天</div>
<div class="t wmc" style="left:531.5px;top:412.5px">下</div>
<div class="t wmc" style="left:565.5px;top:413px;-webkit-text-stroke:.8px #20be6b">載</div>
</div></body></html>
